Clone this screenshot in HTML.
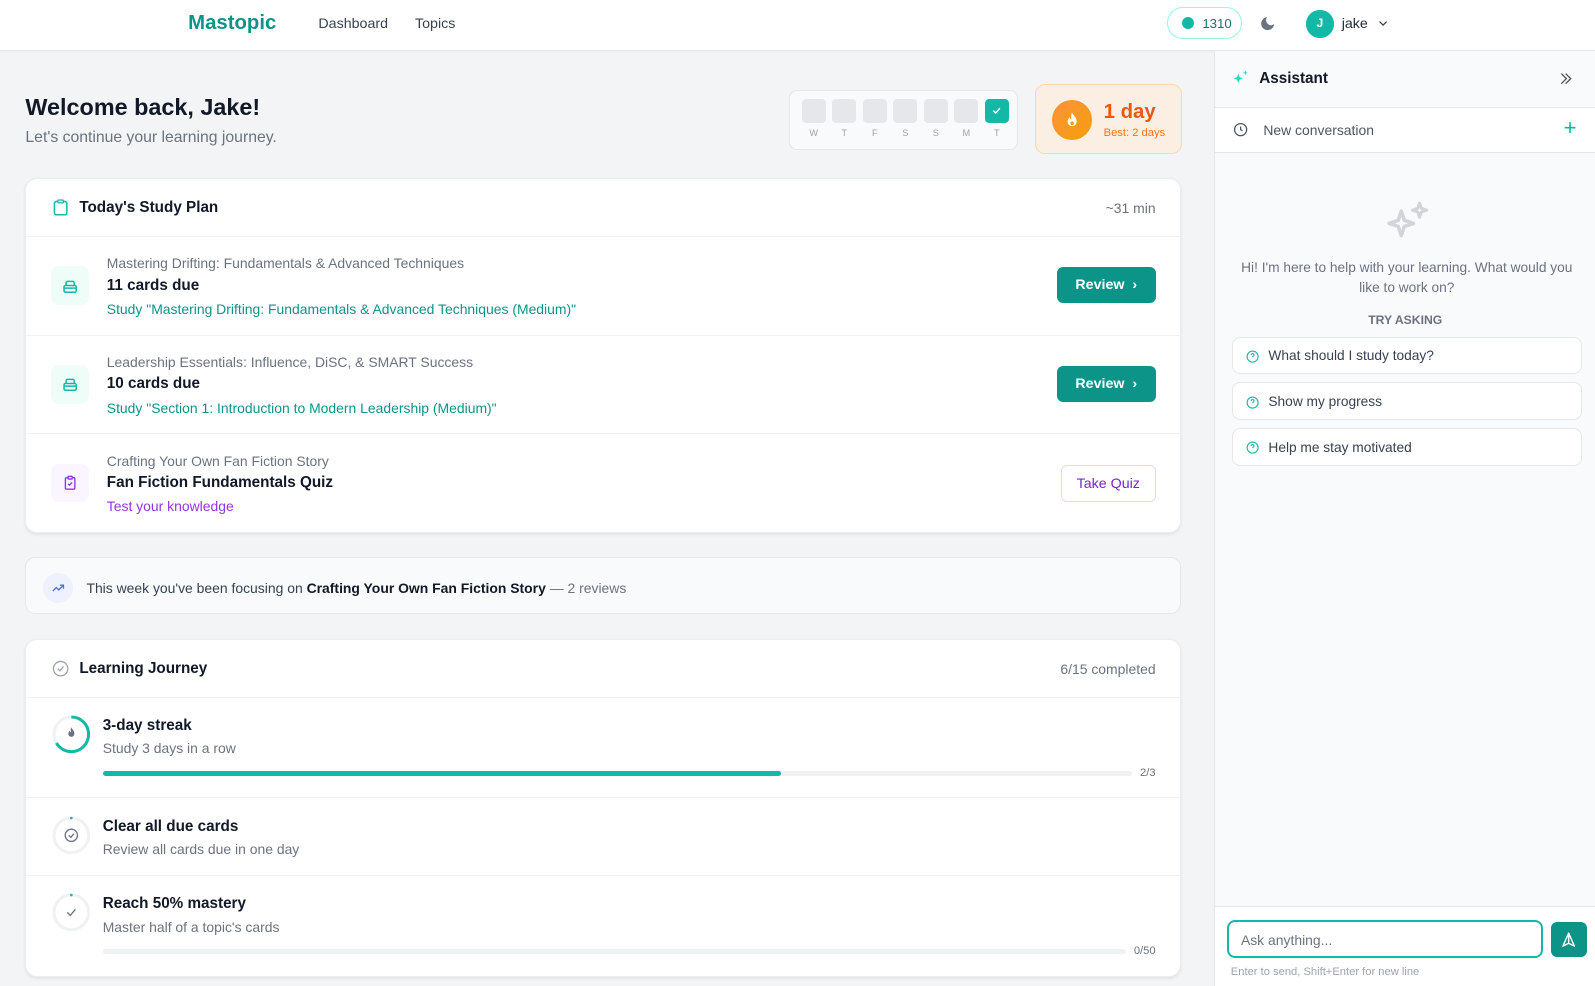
<!DOCTYPE html>
<html><head><meta charset="utf-8"><style>
html{zoom:1.01722}
*{box-sizing:border-box;margin:0;padding:0}
body{width:1568px;height:969px;overflow:hidden;background:#f3f4f6;font-family:"Liberation Sans",sans-serif;color:#111827;position:relative}
.abs{position:absolute}
.hdr{left:0;top:0;width:1568px;height:50px;background:#fff;border-bottom:1px solid #e5e7eb;box-shadow:0 1px 2px rgba(0,0,0,.04)}
.card{position:absolute;left:25px;width:1136px;background:#fff;border-radius:12px;box-shadow:0 1px 3px rgba(0,0,0,.08);border:1px solid #eceef1}
.row{position:absolute;left:0;width:100%;border-top:1px solid #f0f1f3}
.t{position:absolute;white-space:nowrap}
.ico{position:absolute;left:24px;width:38px;height:38px;border-radius:8px}
.btn{position:absolute;right:24px;height:35px;border-radius:6px;font-size:14px;font-weight:bold;display:flex;align-items:center;justify-content:center}
.sug{position:absolute;left:17px;width:344px;height:37px;background:#fff;border:1px solid #e5e7eb;border-radius:8px;font-size:13.5px;color:#374151;display:flex;align-items:center;padding-left:35px}
.sug svg{position:absolute;left:13px;top:12px}
.s{font-size:13.7px}
</style></head><body>
<div class="abs hdr">
 <div class="t" style="left:185px;top:12px;font-size:20px;font-weight:bold;color:#0d9488">Mastopic</div>
 <div class="t" style="left:313px;top:16px;font-size:14px;color:#374151">Dashboard</div>
 <div class="t" style="left:408px;top:16px;font-size:14px;color:#374151">Topics</div>
 <div class="abs" style="left:1147px;top:7px;width:74px;height:31px;border:1px solid #99f6e4;border-radius:16px;background:#fff">
  <div class="abs" style="left:14px;top:9px;width:12px;height:12px;border-radius:50%;background:#14b8a6"></div>
  <div class="t" style="left:34px;top:8px;font-size:13px;color:#0f766e">1310</div></div>
 <svg class="abs" style="left:1238px;top:15px" width="17" height="17" viewBox="0 0 24 24"><path d="M21 12.8A9 9 0 1 1 11.2 3a7 7 0 0 0 9.8 9.8z" fill="#6b7280"/></svg>
 <div class="abs" style="left:1284px;top:10px;width:27px;height:27px;border-radius:50%;background:#14b8a6;color:#fff;font-size:12px;font-weight:bold;text-align:center;line-height:27px">J</div>
 <div class="t" style="left:1319px;top:16px;font-size:14px;color:#1f2937">jake</div>
 <svg class="abs" style="left:1354px;top:17px" width="12" height="12" viewBox="0 0 24 24"><path d="M5 9l7 7 7-7" stroke="#374151" stroke-width="2.5" fill="none"/></svg>
</div>

<div class="t" style="left:25px;top:92px;font-size:23px;font-weight:bold">Welcome back, Jake!</div>
<div class="t" style="left:25px;top:127px;font-size:15.5px;color:#6b7280">Let's continue your learning journey.</div>

<div class="abs" style="left:776px;top:88px;width:225px;height:59px;background:#f9fafb;border:1px solid #e5e7eb;border-radius:8px">
 <div class="abs" style="left:11px;top:8px;display:flex;gap:6px">
  <div style="width:24px;height:24px;border-radius:4px;background:#e5e7eb"></div><div style="width:24px;height:24px;border-radius:4px;background:#e5e7eb"></div><div style="width:24px;height:24px;border-radius:4px;background:#e5e7eb"></div><div style="width:24px;height:24px;border-radius:4px;background:#e5e7eb"></div><div style="width:24px;height:24px;border-radius:4px;background:#e5e7eb"></div><div style="width:24px;height:24px;border-radius:4px;background:#e5e7eb"></div><div style="width:24px;height:24px;border-radius:4px;background:#14b8a6;display:flex;align-items:center;justify-content:center"><svg width="11" height="11" viewBox="0 0 24 24"><path d="M5 12l5 5 9-10" stroke="#fff" stroke-width="3" fill="none"/></svg></div>
 </div>
 <div class="abs" style="left:11px;top:37px;display:flex;gap:6px;font-size:9px;color:#9ca3af">
  <span style="width:24px;text-align:center">W</span><span style="width:24px;text-align:center">T</span><span style="width:24px;text-align:center">F</span><span style="width:24px;text-align:center">S</span><span style="width:24px;text-align:center">S</span><span style="width:24px;text-align:center">M</span><span style="width:24px;text-align:center">T</span></div>
</div>
<div class="abs" style="left:1017px;top:83px;width:145px;height:68px;background:#fbeee2;border:1px solid #fed7aa;border-radius:10px">
 <div class="abs" style="left:16px;top:14px;width:40px;height:40px;border-radius:50%;background:linear-gradient(135deg,#fb923c,#f59e0b)"></div>
 <svg class="abs" style="left:27px;top:25px" width="18" height="18" viewBox="0 0 24 24"><path d="M12 2c1 4 6 6 6 12a6 6 0 0 1-12 0c0-3 2-5 3-6 0 2 1 3 2 3 0-3-1-6 1-9z" fill="#fff"/><circle cx="12" cy="16" r="2.3" fill="#f59e0b"/></svg>
 <div class="t" style="left:67px;top:15px;font-size:20px;font-weight:bold;color:#ea580c">1 day</div>
 <div class="t" style="left:67px;top:41px;font-size:11px;color:#f97316">Best: 2 days</div>
</div>

<div class="card" style="top:175px;height:349px">
 <svg class="abs" style="left:26px;top:20px" width="15" height="17" viewBox="0 0 16 18"><rect x="1.5" y="2.5" width="13" height="14" rx="2" stroke="#14b8a6" stroke-width="1.6" fill="none"/><rect x="5" y="1" width="6" height="3" rx="1" stroke="#14b8a6" stroke-width="1.4" fill="#fff"/></svg>
 <div class="t" style="left:52px;top:20px;font-size:15px;font-weight:bold;color:#111827">Today's Study Plan</div>
 <div class="t s" style="right:24px;top:21px;color:#6b7280">~31 min</div>
 <div class="row" style="top:56px;height:97px">
  <div class="ico" style="top:29px;background:#effdf9"><svg style="margin:11px" width="16" height="16" viewBox="0 0 24 24"><rect x="3" y="11" width="18" height="10" rx="2" stroke="#14b8a6" stroke-width="2.2" fill="none"/><path d="M6 11V7a2 2 0 0 1 2-2h8a2 2 0 0 1 2 2v4M3 15h18" stroke="#14b8a6" stroke-width="2.2" fill="none"/></svg></div>
  <div class="t s" style="left:79px;top:18px;color:#6b7280">Mastering Drifting: Fundamentals &amp; Advanced Techniques</div>
  <div class="t" style="left:79px;top:39px;font-size:15px;font-weight:bold;color:#111827">11 cards due</div>
  <div class="t s" style="left:79px;top:63px;color:#0d9488">Study "Mastering Drifting: Fundamentals &amp; Advanced Techniques (Medium)"</div>
  <div class="btn" style="top:30px;width:97px;background:#0d9488;color:#fff">Review&nbsp;&nbsp;›</div>
 </div>
 <div class="row" style="top:153px;height:97px">
  <div class="ico" style="top:29px;background:#effdf9"><svg style="margin:11px" width="16" height="16" viewBox="0 0 24 24"><rect x="3" y="11" width="18" height="10" rx="2" stroke="#14b8a6" stroke-width="2.2" fill="none"/><path d="M6 11V7a2 2 0 0 1 2-2h8a2 2 0 0 1 2 2v4M3 15h18" stroke="#14b8a6" stroke-width="2.2" fill="none"/></svg></div>
  <div class="t s" style="left:79px;top:18px;color:#6b7280">Leadership Essentials: Influence, DiSC, &amp; SMART Success</div>
  <div class="t" style="left:79px;top:39px;font-size:15px;font-weight:bold;color:#111827">10 cards due</div>
  <div class="t s" style="left:79px;top:63px;color:#0d9488">Study "Section 1: Introduction to Modern Leadership (Medium)"</div>
  <div class="btn" style="top:30px;width:97px;background:#0d9488;color:#fff">Review&nbsp;&nbsp;›</div>
 </div>
 <div class="row" style="top:250px;height:97px">
  <div class="ico" style="top:29px;background:#faf5ff"><svg style="margin:11px" width="16" height="16" viewBox="0 0 24 24"><rect x="5" y="4" width="14" height="17" rx="2" stroke="#9333ea" stroke-width="2" fill="none"/><rect x="9" y="2" width="6" height="4" rx="1" stroke="#9333ea" stroke-width="2" fill="#fff"/><path d="M9 13l2 2 4-4" stroke="#9333ea" stroke-width="2" fill="none"/></svg></div>
  <div class="t s" style="left:79px;top:18px;color:#6b7280">Crafting Your Own Fan Fiction Story</div>
  <div class="t" style="left:79px;top:39px;font-size:15px;font-weight:bold;color:#111827">Fan Fiction Fundamentals Quiz</div>
  <div class="t s" style="left:79px;top:63px;color:#9333ea">Test your knowledge</div>
  <div class="btn" style="top:30px;width:93px;height:37px;background:#fff;border:1px solid #e9d5ff;color:#7e22ce;font-weight:normal">Take Quiz</div>
 </div>
</div>

<div class="abs" style="left:25px;top:548px;width:1136px;height:56px;background:#f9fafb;border:1px solid #e5e7eb;border-radius:10px">
 <div class="abs" style="left:16px;top:14px;width:30px;height:30px;border-radius:50%;background:#eef2ff"></div>
 <svg class="abs" style="left:24px;top:22px" width="14" height="14" viewBox="0 0 24 24"><path d="M3 17l6-6 4 4 8-8M15 7h6v6" stroke="#4f6ee8" stroke-width="2.2" fill="none"/></svg>
 <div class="t s" style="left:59px;top:21px;color:#374151">This week you've been focusing on <b style="color:#111827">Crafting Your Own Fan Fiction Story</b> <span style="color:#6b7280">— 2 reviews</span></div>
</div>

<div class="card" style="top:628px;height:332px">
 <svg class="abs" style="left:25px;top:20px" width="17" height="17" viewBox="0 0 24 24"><circle cx="12" cy="12" r="10" stroke="#9ca3af" stroke-width="1.8" fill="none"/><path d="M8 12l3 3 5-6" stroke="#9ca3af" stroke-width="1.8" fill="none"/></svg>
 <div class="t" style="left:52px;top:20px;font-size:15px;font-weight:bold">Learning Journey</div>
 <div class="t s" style="right:24px;top:21px;color:#6b7280">6/15 completed</div>
 <div class="row" style="top:56px;height:99px">
  <svg class="abs" style="left:25px;top:17px" width="38" height="38" viewBox="0 0 38 38"><circle cx="19" cy="19" r="17" stroke="#f0f1f3" stroke-width="3" fill="none"/><circle cx="19" cy="19" r="17" stroke="#14b8a6" stroke-width="3" fill="none" stroke-dasharray="71 107" transform="rotate(-90 19 19)"/><path d="M19 12c.5 2 3 3 3 6.5a3 3 0 0 1-6 0c0-1.5 1-2.5 1.5-3 0 1 .5 1.5 1 1.5 0-1.5-.5-3 .5-5z" fill="#6b7280"/></svg>
  <div class="t" style="left:75px;top:19px;font-size:15px;font-weight:bold">3-day streak</div>
  <div class="t s" style="left:75px;top:42px;color:#6b7280">Study 3 days in a row</div>
  <div class="abs" style="left:75px;top:72px;width:1012px;height:5px;border-radius:3px;background:#f0f1f3"><div style="width:667px;height:5px;border-radius:3px;background:#14b8a6"></div></div>
  <div class="t" style="right:24px;top:68px;font-size:11px;color:#6b7280">2/3</div>
 </div>
 <div class="row" style="top:155px;height:76px">
  <svg class="abs" style="left:25px;top:17px" width="38" height="38" viewBox="0 0 38 38"><circle cx="19" cy="19" r="17" stroke="#f0f1f3" stroke-width="3" fill="none"/><circle cx="19" cy="2" r="1.3" fill="#14b8a6"/><circle cx="19" cy="19" r="6" stroke="#6b7280" stroke-width="1.3" fill="none"/><path d="M16.5 19l2 2 3-3.5" stroke="#6b7280" stroke-width="1.3" fill="none"/></svg>
  <div class="t" style="left:75px;top:19px;font-size:15px;font-weight:bold">Clear all due cards</div>
  <div class="t s" style="left:75px;top:42px;color:#6b7280">Review all cards due in one day</div>
 </div>
 <div class="row" style="top:231px;height:99px">
  <svg class="abs" style="left:25px;top:17px" width="38" height="38" viewBox="0 0 38 38"><circle cx="19" cy="19" r="17" stroke="#f0f1f3" stroke-width="3" fill="none"/><circle cx="19" cy="2" r="1.3" fill="#14b8a6"/><path d="M15 19l3 3 5-6" stroke="#6b7280" stroke-width="1.3" fill="none"/></svg>
  <div class="t" style="left:75px;top:19px;font-size:15px;font-weight:bold">Reach 50% mastery</div>
  <div class="t s" style="left:75px;top:42px;color:#6b7280">Master half of a topic's cards</div>
  <div class="abs" style="left:75px;top:72px;width:1006px;height:5px;border-radius:3px;background:#f0f1f3"></div>
  <div class="t" style="right:24px;top:68px;font-size:11px;color:#6b7280">0/50</div>
 </div>
</div>

<div class="abs" style="left:1193px;top:50px;width:375px;height:919px;background:#f9fafb;border-left:1px solid #e5e7eb">
 <svg class="abs" style="left:16px;top:18px" width="19" height="17" viewBox="0 0 24 22"><path d="M9 6l1.6 4.4L15 12l-4.4 1.6L9 18l-1.6-4.4L3 12l4.4-1.6z" fill="#2dd4bf"/><path d="M18 2l.8 2.2L21 5l-2.2.8L18 8l-.8-2.2L15 5l2.2-.8z" fill="#2dd4bf"/></svg>
 <div class="t" style="left:44px;top:19px;font-size:15px;font-weight:bold;color:#111827">Assistant</div>
 <svg class="abs" style="left:337px;top:19px" width="17" height="17" viewBox="0 0 24 24"><path d="M6 5l7 7-7 7M12 5l7 7-7 7" stroke="#4b5563" stroke-width="1.8" fill="none"/></svg>
 <div class="abs" style="left:0;top:55px;width:374px;height:45px;background:#fff;border-top:1px solid #e5e7eb;border-bottom:1px solid #e5e7eb">
  <svg class="abs" style="left:18px;top:14px" width="15" height="15" viewBox="0 0 24 24"><circle cx="12" cy="12" r="9.5" stroke="#4b5563" stroke-width="2" fill="none"/><path d="M12 7v5l3 2" stroke="#4b5563" stroke-width="2" fill="none"/></svg>
  <div class="t s" style="left:48px;top:14px;color:#4b5563">New conversation</div>
  <div class="t" style="left:343px;top:8px;font-size:22px;color:#14b8a6;line-height:24px">+</div>
 </div>
 <svg class="abs" style="left:168px;top:148px" width="44" height="40" viewBox="0 0 44 40"><path d="M16 10l3 9 9 3-9 3-3 9-3-9-9-3 9-3z" fill="none" stroke="#d1d5db" stroke-width="3.5" stroke-linejoin="round"/><path d="M34 2l1.8 5.2L41 9l-5.2 1.8L34 16l-1.8-5.2L27 9l5.2-1.8z" fill="none" stroke="#d1d5db" stroke-width="3" stroke-linejoin="round"/></svg>
 <div class="abs" style="left:20px;top:204px;width:338px;text-align:center;font-size:13.5px;line-height:19px;color:#6b7280">Hi! I'm here to help with your learning. What would you like to work on?</div>
 <div class="abs" style="left:0;top:258px;width:375px;text-align:center;font-size:12px;font-weight:bold;color:#6b7280">TRY ASKING</div>
 <div class="sug" style="top:281px"><svg width="13" height="13" viewBox="0 0 24 24"><circle cx="12" cy="12" r="10" stroke="#14b8a6" stroke-width="2" fill="none"/><path d="M9.5 9a2.5 2.5 0 1 1 3.5 2.3c-.7.3-1 .9-1 1.7M12 17h.01" stroke="#14b8a6" stroke-width="2" fill="none"/></svg>What should I study today?</div>
 <div class="sug" style="top:326px"><svg width="13" height="13" viewBox="0 0 24 24"><circle cx="12" cy="12" r="10" stroke="#14b8a6" stroke-width="2" fill="none"/><path d="M9.5 9a2.5 2.5 0 1 1 3.5 2.3c-.7.3-1 .9-1 1.7M12 17h.01" stroke="#14b8a6" stroke-width="2" fill="none"/></svg>Show my progress</div>
 <div class="sug" style="top:371px"><svg width="13" height="13" viewBox="0 0 24 24"><circle cx="12" cy="12" r="10" stroke="#14b8a6" stroke-width="2" fill="none"/><path d="M9.5 9a2.5 2.5 0 1 1 3.5 2.3c-.7.3-1 .9-1 1.7M12 17h.01" stroke="#14b8a6" stroke-width="2" fill="none"/></svg>Help me stay motivated</div>
 <div class="abs" style="left:0;top:841px;width:375px;height:78px;background:#fff;border-top:1px solid #e5e7eb">
  <div class="abs" style="left:12px;top:12px;width:311px;height:38px;border:2px solid #14b8a6;border-radius:8px;background:#fff"><div class="t s" style="left:12px;top:10px;color:#6b7280">Ask anything...</div></div>
  <div class="abs" style="left:331px;top:14px;width:35px;height:35px;border-radius:6px;background:#0d9488"><svg style="margin:9px" width="17" height="17" viewBox="0 0 24 24"><path d="M12 3L4 21l8-4 8 4z M12 3v14" stroke="#fff" stroke-width="2" fill="none" stroke-linejoin="round"/></svg></div>
  <div class="t" style="left:16px;top:58px;font-size:11px;color:#9ca3af">Enter to send, Shift+Enter for new line</div>
 </div>
</div>
</body></html>
